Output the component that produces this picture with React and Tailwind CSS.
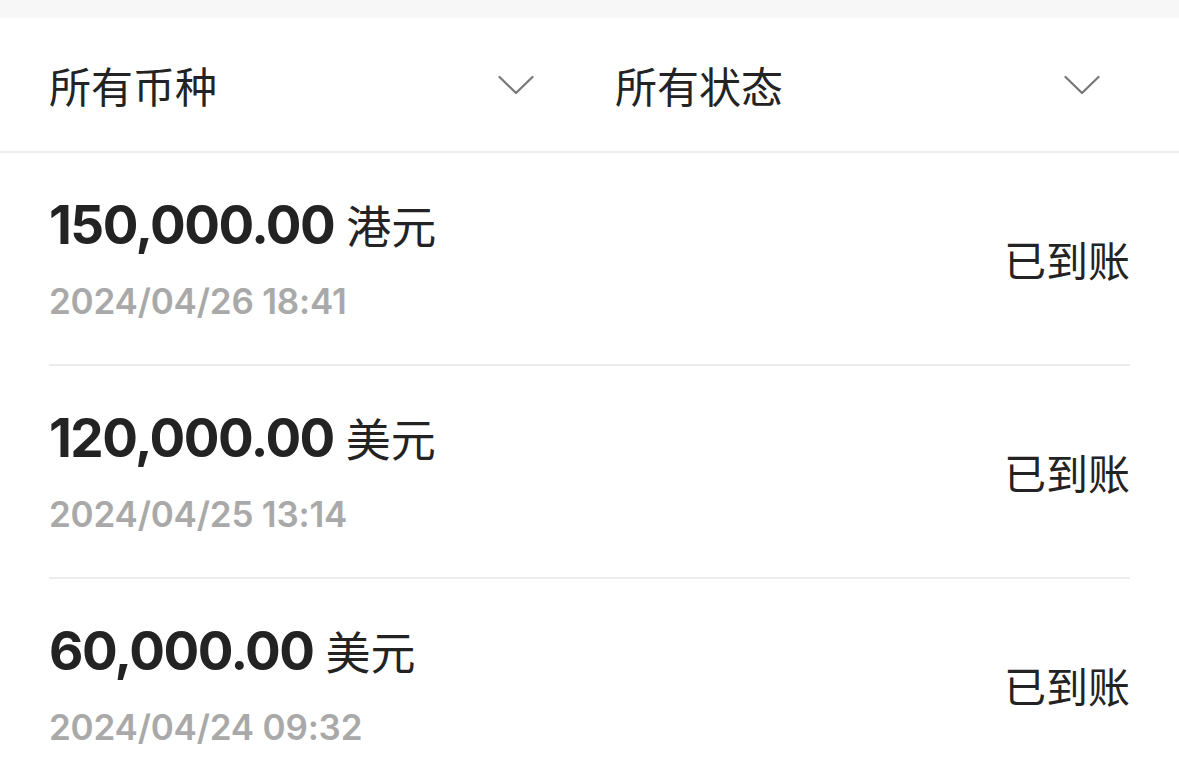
import React from "react";

const rows = [
  { amount: "150,000.00", cur: "港元", date: "2024/04/26 18:41", status: "已到账" },
  { amount: "120,000.00", cur: "美元", date: "2024/04/25 13:14", status: "已到账" },
  { amount: "60,000.00", cur: "美元", date: "2024/04/24 09:32", status: "已到账" },
];

const cjk = "font-['Noto_Sans_CJK_SC',sans-serif]";

function Chevron() {
  return (
    <svg width="36" height="20" viewBox="0 0 36 20" fill="none" className="shrink-0">
      <path d="M1.5 2 L18 18 L34.5 2" stroke="#777777" strokeWidth="2.2" strokeLinecap="round" strokeLinejoin="round" />
    </svg>
  );
}

export default function App() {
  return (
    <div className="w-[1179px] h-[783px] overflow-hidden bg-white">
      <div className="h-[18px] bg-[#f7f7f7]" />
      <div className="h-[135px] grid grid-cols-2 gap-[81px] pl-[49px] pr-[79px] items-center border-b-[2px] border-[#ededed]">
        <div className="flex items-center justify-between">
          <span className={`${cjk} text-[42px] leading-none text-[#232323]`}>所有币种</span>
          <Chevron />
        </div>
        <div className="flex items-center justify-between">
          <span className={`${cjk} text-[42px] leading-none text-[#232323]`}>所有状态</span>
          <Chevron />
        </div>
      </div>
      <div>
        {rows.map((r, i) => (
          <div key={i} className="mx-[49px] h-[213px] flex items-center justify-between border-b-[2px] border-[#ececec]">
            <div className="flex flex-col">
              <div className="flex items-baseline h-[56px]">
                <span className="font-['Inter',sans-serif] font-bold text-[53px] leading-[56px] tracking-[-1.5px] text-[#232323]">{r.amount}</span>
                <span className={`${cjk} text-[45px] leading-[56px] ml-[12px] text-[#232323]`}>{r.cur}</span>
              </div>
              <div className="mt-[28px] font-['Inter',sans-serif] font-semibold text-[35px] leading-[40px] tracking-[-0.2px] text-[#a9a9a9]">{r.date}</div>
            </div>
            <span className={`${cjk} text-[42px] leading-none text-[#232323]`}>{r.status}</span>
          </div>
        ))}
      </div>
    </div>
  );
}
